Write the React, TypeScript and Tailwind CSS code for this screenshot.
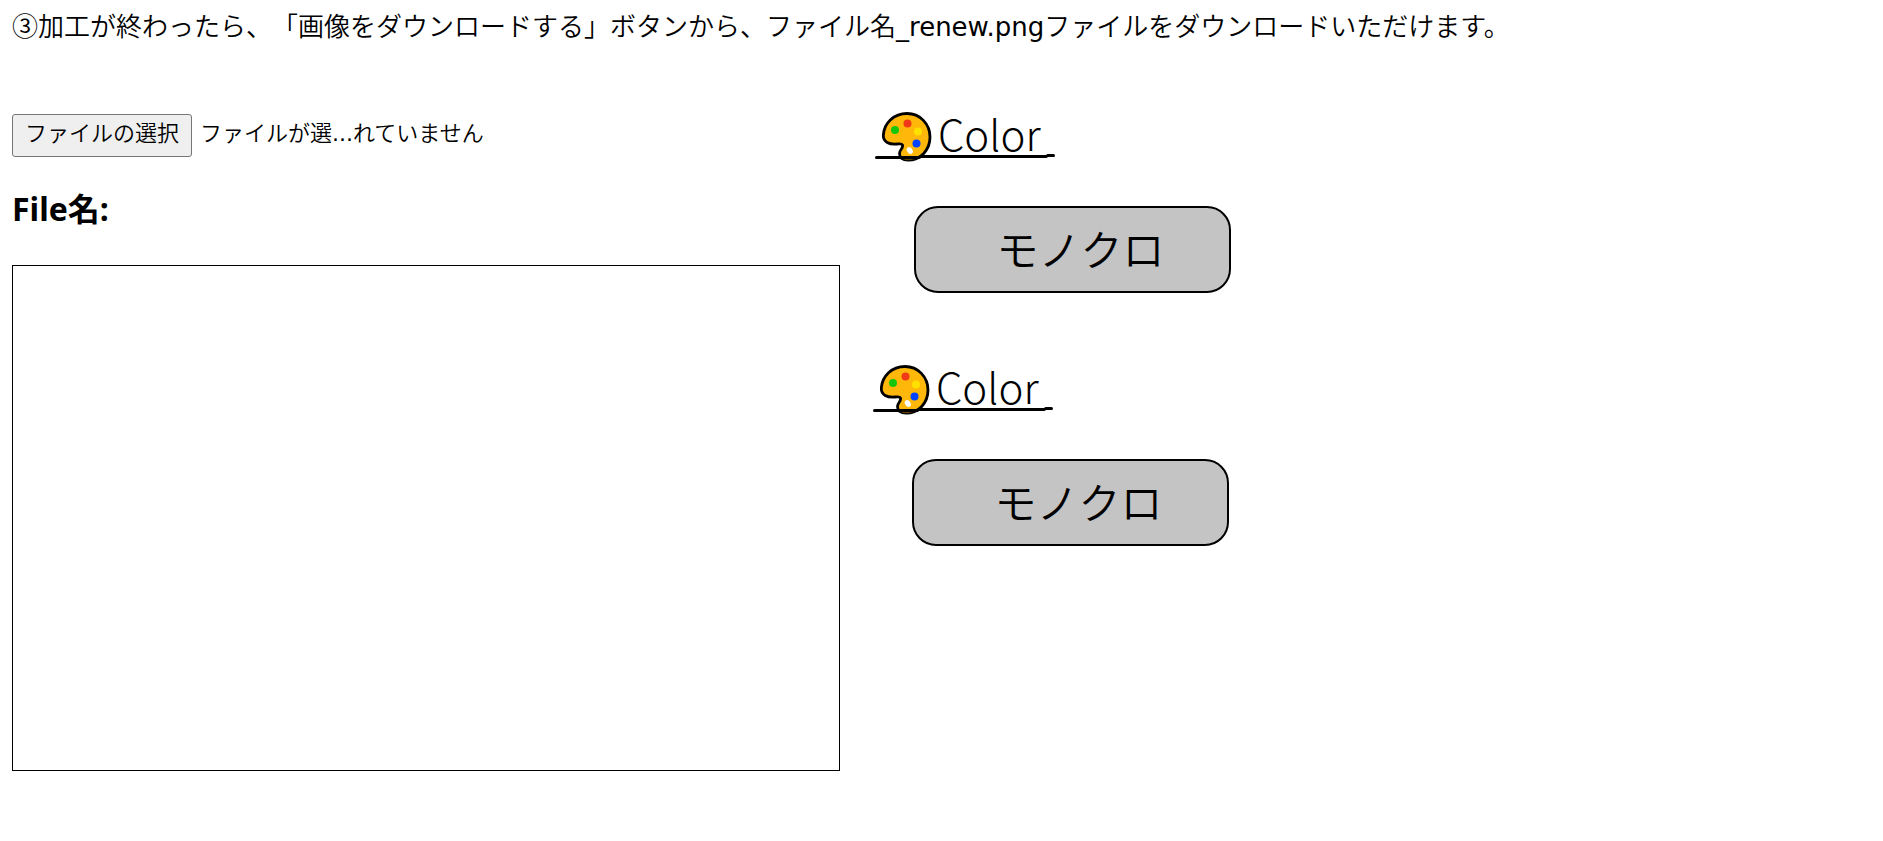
import { useState } from "react";

function PaletteIcon() {
  return (
    <svg viewBox="0 0 50 50" className="h-[50px] w-[50px] shrink-0" aria-hidden="true">
      <path
        d="M25 1.5C38 1.5 48 12 48 25C48 38 38.500 48.200 26 48.200C20.500 48.200 17.500 45.500 17.500 41.500C17.500 37.500 21.500 36.500 20.500 33C19.800 31.300 18 31.800 15 32C7 32.600 1.300 30 1.300 23.500C2 11 12 1.500 25 1.500Z"
        fill="#ffb70a"
        stroke="#000"
        strokeWidth="2.800"
      />
      <circle cx="13" cy="18" r="4" fill="#16c60c" />
      <circle cx="25.500" cy="11.500" r="4" fill="#f03a17" />
      <circle cx="36" cy="19.500" r="4" fill="#ffe100" />
      <circle cx="34.500" cy="31.500" r="4" fill="#0043ff" />
      <ellipse cx="27.800" cy="38.500" rx="2.700" ry="3.600" fill="#fff" transform="rotate(-35 27.800 38.500)" />
      <path d="M18 44.500H38C34 47 30 48.200 26 48.200C22 48.200 19.500 46.500 18 44.500Z" fill="#5c4300" />
    </svg>
  );
}

function ColorSection() {
  return (
    <section className="font-['Noto_Sans_CJK_JP',sans-serif] text-[42px] leading-[48px]">
      <h2 className="relative flex h-[50px] w-[180px] items-center gap-[6px] pl-[7px] font-light">
        <PaletteIcon />
        <span className="pb-2">Color</span>
        <svg
          viewBox="0 0 180 6"
          className="absolute bottom-[3px] left-0 h-[6px] w-[180px]"
          fill="none"
          stroke="#000"
          strokeWidth="3"
          strokeLinecap="round"
          aria-hidden="true"
        >
          <path d="M1.500 4.500H44L46 3.500H171L173 2.500H178.500" />
        </svg>
      </h2>
      <button
        type="button"
        className="mt-11 ml-[39px] h-[87px] w-[317px] rounded-3xl border-2 border-black bg-[#c4c4c4] pb-1 pl-4 font-[350]"
      >
        モノクロ
      </button>
    </section>
  );
}

export default function App() {
  const [fileName, setFileName] = useState("");

  return (
    <main className="bg-white px-3 pb-8 font-['Noto_Sans','Noto_Sans_CJK_JP',sans-serif] text-black">
      <p className="pt-[5px] font-['DejaVu_Sans','Noto_Sans_CJK_JP',sans-serif] text-[26px] leading-[44px] font-[350] [text-spacing-trim:space-all]">
        ③加工が終わったら、「画像をダウンロードする」ボタンから、ファイル名
        <span className="font-normal">_renew.png</span>
        ファイルをダウンロードいただけます。
      </p>
      <div className="mt-[63px] flex items-start gap-[35px]">
        <div>
          <div className="mt-[2px] flex items-center gap-2 font-['DejaVu_Sans','Noto_Sans_CJK_JP',sans-serif] text-[22px] leading-[37px] font-[350]">
            <input
              id="source-image"
              type="file"
              accept="image/*"
              className="peer sr-only"
              onChange={(event) => setFileName(event.target.files?.[0]?.name ?? "")}
            />
            <label
              htmlFor="source-image"
              className="rounded-[3px] border border-[#767676] bg-[#efefef] px-3 pb-1 peer-focus-visible:outline-2"
            >
              ファイルの選択
            </label>
            <span className="pb-1">
              {fileName || (
                <>
                  ファイルが選<span className="font-normal">...</span>れていません
                </>
              )}
            </span>
          </div>
          <h2 className="mt-7 text-[32px] leading-[48px] font-bold">File名:{fileName}</h2>
          <canvas width={826} height={504} className="mt-8 border border-black" />
        </div>
        <div className="flex flex-col gap-[72px]">
          <ColorSection />
          <div className="-ml-[2px]">
            <ColorSection />
          </div>
        </div>
      </div>
    </main>
  );
}
